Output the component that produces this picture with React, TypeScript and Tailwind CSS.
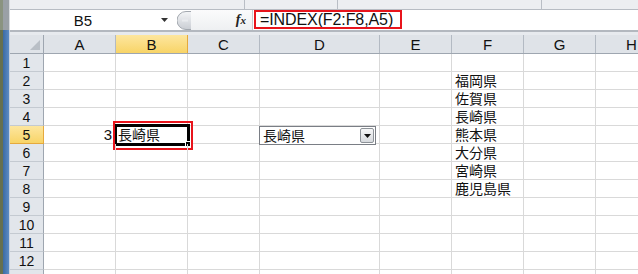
import React from "react";

const cols = [
  { k: "A", w: "w-[72px]" },
  { k: "B", w: "w-[72px]" },
  { k: "C", w: "w-[72px]" },
  { k: "D", w: "w-[120px]" },
  { k: "E", w: "w-[72px]" },
  { k: "F", w: "w-[72px]" },
  { k: "G", w: "w-[72px]" },
  { k: "H", w: "w-[72px]" },
];

const fList: Record<number, string> = {
  2: "福岡県",
  3: "佐賀県",
  4: "長崎県",
  5: "熊本県",
  6: "大分県",
  7: "宮崎県",
  8: "鹿児島県",
};

function Cell({ r, c, w }: { r: number; c: string; w: string }) {
  let content: React.ReactNode = null;
  if (c === "F" && fList[r]) {
    content = <span className="pl-[3px] text-[14px] leading-none">{fList[r]}</span>;
  }
  if (r === 5 && c === "A") {
    content = <span className="ml-auto pr-[3px] text-[15px] leading-none">3</span>;
  }
  if (r === 5 && c === "B") {
    content = (
      <>
        <span className="pl-[2px] text-[14px] leading-none">長崎県</span>
        <div className="absolute left-[-2px] top-[-2px] w-[76px] h-[22px] border-[3px] border-black pointer-events-none" />
        <div className="absolute left-[69px] top-[15px] w-[6px] h-[6px] bg-black border border-white" />
        <div className="absolute left-[-3px] top-[-5px] w-[80px] h-[29px] border-2 border-[#e8141c]" />
      </>
    );
  }
  if (r === 5 && c === "D") {
    content = (
      <div className="absolute left-[-1px] top-0 w-[117px] h-[19px] border border-[#7a7e85] bg-white flex items-center z-10">
        <span className="pl-[3px] text-[14px] leading-none">長崎県</span>
        <div className="ml-auto mr-[1px] w-[14px] h-[15px] rounded-[2px] border border-[#8d9298] bg-gradient-to-b from-[#f6f7f8] to-[#d7dade] flex items-center justify-center">
          <svg width="7" height="4" viewBox="0 0 7 4">
            <path d="M0 0 H7 L3.5 4 Z" fill="#111" />
          </svg>
        </div>
      </div>
    );
  }
  return (
    <div className={`${w} shrink-0 h-full border-r border-[#d9d9d9] flex items-center relative`}>
      {content}
    </div>
  );
}

export default function App() {
  const rows = Array.from({ length: 13 }, (_, i) => i + 1);
  return (
    <div className="w-[638px] h-[274px] overflow-hidden bg-white flex font-['Liberation_Sans','Noto_Sans_CJK_JP',sans-serif] text-[#111]">
      {/* left window edge */}
      <div className="w-[10px] shrink-0 flex flex-col">
        <div className="h-[30px] flex">
          <div className="w-[3px] bg-[#8a9380]" />
          <div className="w-[6px] bg-[#9aa0a6]" />
          <div className="w-[1px] bg-[#d8dbdf]" />
        </div>
        <div className="flex-1 flex">
          <div className="w-[3px] bg-[#66704f]" />
          <div className="w-[6px] bg-gradient-to-r from-[#3b6ba4] to-[#5d8cc4]" />
          <div className="w-[1px] bg-[#c9d3de]" />
        </div>
      </div>

      <div className="flex-1 flex flex-col min-w-0">
        {/* ribbon bottom strip */}
        <div className="h-[9px] shrink-0 bg-[#eceef1] flex">
          <div className="w-[235px] border-r border-[#b9bec5]" />
          <div className="w-[93px] border-r border-[#b9bec5]" />
          <div className="w-[204px] border-r border-[#b9bec5]" />
          <div className="flex-1" />
        </div>
        <div className="h-[1px] shrink-0 bg-[#b7bcc3]" />

        {/* formula bar */}
        <div className="h-[20px] shrink-0 flex bg-white relative">
          <div className="w-[146px] shrink-0 flex items-center justify-center text-[15px] leading-none">B5</div>
          <div className="w-[16px] shrink-0 flex items-center justify-center">
            <svg width="7" height="4" viewBox="0 0 7 4">
              <path d="M0 0 H7 L3.5 4 Z" fill="#333" />
            </svg>
          </div>
          <div className="w-[5px] shrink-0" />
          <div className="w-[14px] shrink-0 flex items-center">
            <svg width="14" height="19" viewBox="0 0 14 19">
              <defs>
                <linearGradient id="hg" x1="0" y1="0" x2="0" y2="1">
                  <stop offset="0" stopColor="#f4f5f7" />
                  <stop offset="1" stopColor="#c9cdd3" />
                </linearGradient>
              </defs>
              <path d="M14 0.5 H9 A8.5 8.5 0 0 0 9 18.5 H14" fill="url(#hg)" stroke="#a3a8af" />
              <path d="M5 9.5 H11" stroke="#e9ebee" strokeWidth="2" />
            </svg>
          </div>
          <div className="w-[61px] shrink-0 bg-gradient-to-b from-[#fbfbfc] to-[#eef0f2] flex items-center justify-end pr-[6px]">
            <span className="font-['Liberation_Serif',serif] italic font-bold text-[14px] leading-none text-[#222]">
              f<span className="text-[11px]">x</span>
            </span>
          </div>
          <div className="flex-1 flex items-center pl-[7px] text-[16px] leading-none tracking-[-0.1px] relative border-l border-[#c8ccd2]">
            =INDEX(F2:F8,A5)
            <div className="absolute left-[1px] top-[0px] w-[148px] h-[19px] border-2 border-[#e8141c]" />
          </div>
        </div>
        <div className="h-[2px] shrink-0 bg-[#b3b8bf]" />
        <div className="h-[3px] shrink-0 bg-[#e7eaee]" />

        {/* header row */}
        <div className="h-[19px] shrink-0 flex border-b border-[#9ea6b0]">
          <div className="w-[34px] shrink-0 h-full bg-[#dfe3e8] border-r border-[#9ea6b0] relative">
            <svg className="absolute right-[3px] bottom-[3px]" width="10" height="10" viewBox="0 0 10 10">
              <path d="M10 0 V10 H0 Z" fill="#b9bfc6" />
            </svg>
          </div>
          {cols.map((c) => (
            <div
              key={c.k}
              className={`${c.w} shrink-0 h-full border-r flex items-center justify-center text-[15px] leading-none ${
                c.k === "B"
                  ? "bg-gradient-to-b from-[#fde69e] to-[#f8d466] border-[#e5a93d]"
                  : "bg-[#dfe3e8] border-[#b3bac3]"
              }`}
            >
              {c.k}
            </div>
          ))}
        </div>

        {/* rows */}
        {rows.map((r) => (
          <div key={r} className="h-[18px] shrink-0 flex border-b border-[#d9d9d9]">
            <div
              className={`w-[34px] shrink-0 h-[18px] -mb-px border-r flex items-center justify-center text-[14px] leading-none ${
                r === 5
                  ? "bg-gradient-to-b from-[#fde69e] to-[#f8d466] border-r-[#e5a93d] border-b border-b-[#e5a93d]"
                  : "bg-[#e2e6eb] border-r-[#9ea6b0] border-b border-b-[#c4cad1]"
              }`}
            >
              {r}
            </div>
            {cols.map((c) => (
              <Cell key={c.k} r={r} c={c.k} w={c.w} />
            ))}
          </div>
        ))}
      </div>
    </div>
  );
}
